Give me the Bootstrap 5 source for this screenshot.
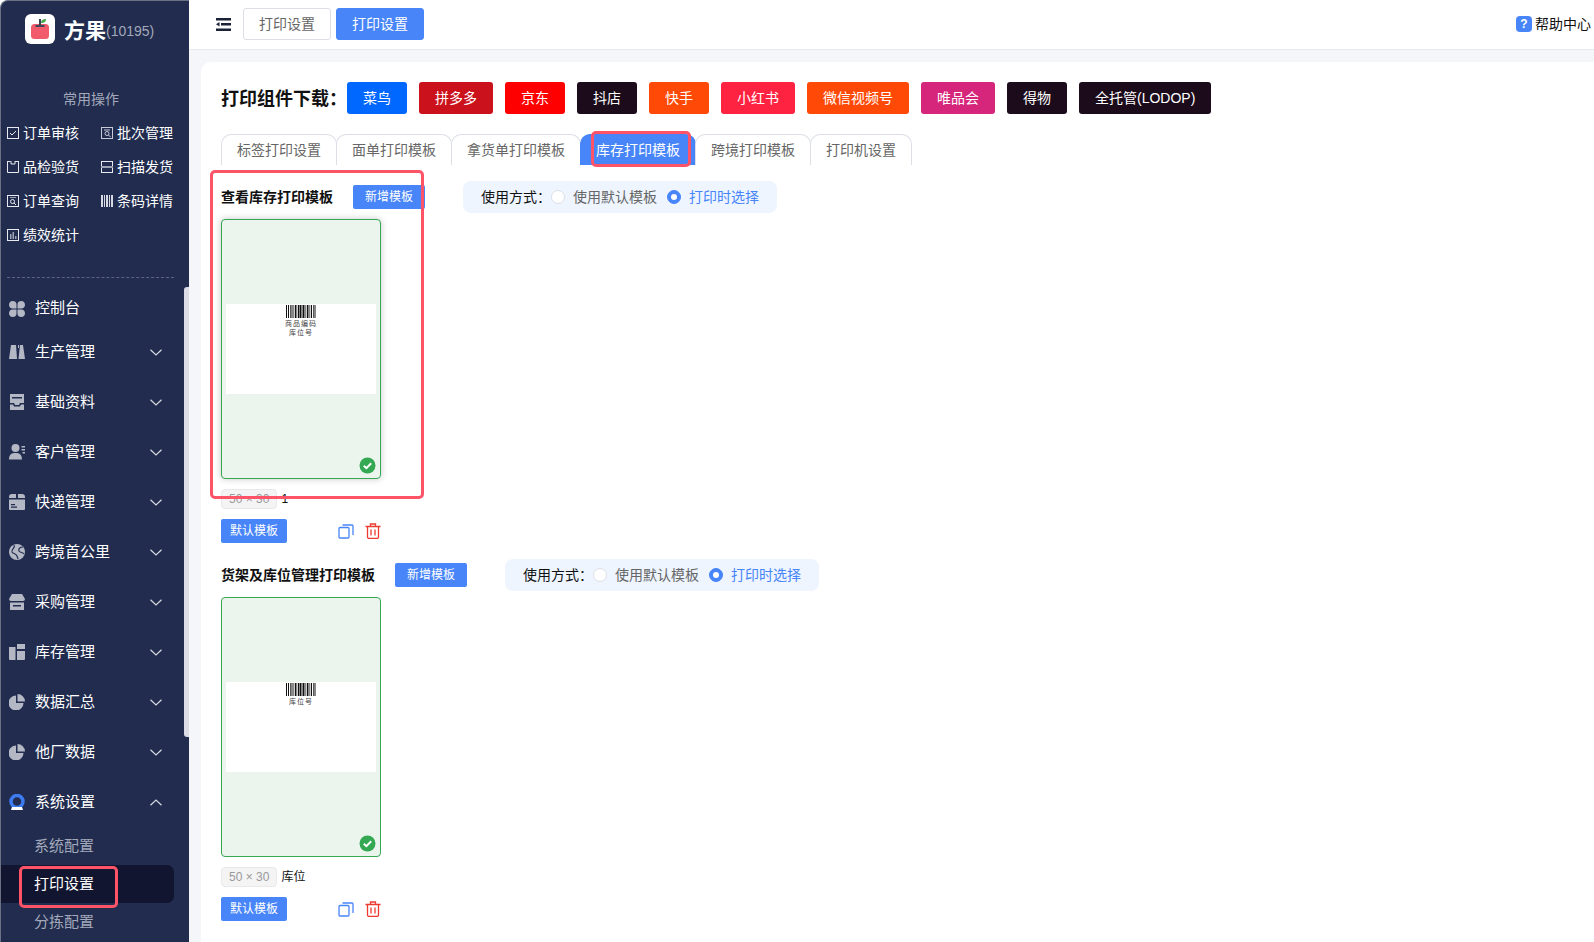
<!DOCTYPE html>
<html lang="zh-CN">
<head>
<meta charset="utf-8">
<title>打印设置</title>
<link href="https://cdn.jsdelivr.net/npm/bootstrap@5.3.0/dist/css/bootstrap.min.css" rel="stylesheet">
<style>
html,body{height:100%;overflow:hidden}
body{font-family:"Liberation Sans","Noto Sans CJK SC",sans-serif;font-size:14px;color:#111;background:#fff}
.app-shell{height:942px;position:relative}
.side{width:189px;background:#212c4f;color:#fff;border-top-left-radius:8px;border-left:1px solid #6b7185;border-top:1px solid #6b7185;position:relative;overflow:hidden}
.brand{height:84px;padding:13px 0 0 24px}
.brand-box{width:30px;height:30px;background:#fff;border-radius:6px}
.brand-name{font-size:21px;font-weight:700;line-height:34px;margin-left:9px}
.brand-id{font-size:14px;color:#a3a9ba;line-height:34px}
.quick-title{height:28px;line-height:28px;text-align:center;font-size:14px;color:#a3a9ba;padding-right:8px;margin-bottom:3px}
.quick-grid{display:grid;grid-template-columns:94px 80px;grid-auto-rows:34px;padding-left:6px}
.quick-item{gap:4px;font-size:14px;line-height:34px;white-space:nowrap}
.quick-item svg{width:12px;height:12px;flex:none}
.side-rule{border-top:1px dashed #5c6480;margin:25px 15px 10px 6px}
.menu-row{height:50px;font-size:15px;padding-left:8px;padding-right:27px;white-space:nowrap}
.menu-row.first-row{height:39px;padding-top:2px}
.menu-row>svg:first-child{width:16px;height:16px;margin-right:10px;flex:none}
.menu-row .chev{width:12px;height:7px;margin-left:auto}
.sub-row{height:38px;line-height:38px;font-size:15px;padding-left:33px;color:#a3a9ba;width:173px}
.sub-row.on{background:#11152f;color:#fff;border-radius:0 7px 7px 0}
.side-scroll{position:absolute;right:0;top:286px;width:5px;height:450px;background:#dcdce6;border-radius:3px 0 0 3px}
.topbar{height:50px;border-bottom:1px solid #e8e9ef;padding:0 3px 1px 27px;background:#fff;flex:none}
.burger{width:15px;height:13px;margin-right:12px}
.top-btn{width:88px;height:32px;padding:0;font-size:14px;line-height:30px;border-radius:3px;margin-right:5px}
.top-btn.plain{background:#fff;border:1px solid #dcdfe6;color:#666}
.top-btn.blue{background:#4785f8;border:1px solid #4785f8;color:#fff}
.help-link{gap:3px;line-height:20px}
.help-mark{width:16px;height:16px;border-radius:4px;background:#4785f8;color:#fff;font-size:12px;font-weight:700;line-height:16px;text-align:center}
.stage{background:#f5f6fa;padding:12px 0 0 12px;min-height:0}
.sheet{background:#fff;border-radius:10px 0 0 0;padding:20px;height:100%;overflow:hidden}
.dl-title{font-size:18px;font-weight:700;width:126px;height:32px;line-height:34px;white-space:nowrap;margin-right:-12px}
.dl-row{gap:12px}
.dl-btn{height:32px;padding:0 16px;font-size:14px;line-height:32px;border:0;border-radius:3px;color:#fff;white-space:nowrap}
.dl-btn:hover{color:#fff}
.c-cn{background:#0068ff}.c-pd{background:#cb111b}.c-jd{background:#f00}.c-dk{background:#1c0b1b}.c-ks{background:#ff4906}.c-xh{background:#ff2342}.c-vp{background:#d6267b}
.tabs-line{border-bottom:0;margin-top:20px;flex-wrap:nowrap}
.tabs-line .nav-link{height:31px;line-height:30px;padding:0 15px;font-size:14px;color:#666;border:1px solid #dcdfe6;border-bottom:0;border-radius:10px 10px 0 0;margin:0 0 0 -1px;background:#fff}
.tabs-line .nav-item:first-child .nav-link{margin-left:0}
.tabs-line .nav-link.active{background:#4785f8;border-color:#4785f8;color:#fff}
.tpl-block{margin-top:16px}
.tpl-head{height:32px}
.tpl-name{font-size:14px;font-weight:700;line-height:32px;margin-right:20px;white-space:nowrap}
.mini-btn{height:24px;padding:0 12px;font-size:12px;line-height:24px;background:#4785f8;border:0;border-radius:2px;color:#fff;white-space:nowrap}
.mini-btn:hover{background:#4785f8;color:#fff}
.mini-btn.tight{padding:0 9px}
.use-box{height:32px;margin-left:38px;padding:0 18px 0 18px;background:#eef5ff;border-radius:8px;white-space:nowrap}
.use-label{width:70px}
.use-box .form-check-input{width:14px;height:14px;margin:0;border-color:#dcdfe6;flex:none}
.use-box .form-check-input:checked{background-color:#4785f8;border-color:#4785f8}
.use-opt{color:#666;margin:0 10px 0 8px}
.use-opt.sel{color:#4785f8;margin-right:0}
.tpl-card{width:160px;height:260px;margin-top:6px;background:#ebf5ee;border:1px solid #34a853;border-radius:4px;position:relative}
.tpl-card.hov{box-shadow:0 0 7px rgba(0,0,0,.22)}
.label-sheet{width:150px;height:90px;background:#fff;text-align:center;padding-top:1px}
.label-sheet svg{display:block;width:30px;height:13px;margin:0 auto 1px}
.label-txt{font-size:7px;line-height:9px;color:#444;letter-spacing:1px;white-space:nowrap}
.ok-badge{position:absolute;right:4px;bottom:4px;width:17px;height:17px}
.size-line{margin-top:10px;height:20px;gap:4px;font-size:12px;line-height:18px}
.size-tag{height:20px;padding:0 7px;background:#f4f4f5;border:1px solid #e9e9eb;border-radius:4px;color:#999;font-size:12px;line-height:18px;white-space:nowrap}
.act-line{margin-top:10px;width:160px}
.act-line svg{width:16px;height:16px}
.act-gap{gap:11px;margin-left:auto}
.anno{position:absolute;border:3px solid #ff5468;border-radius:5px;pointer-events:none}
.anno-a{left:210px;top:170px;width:214px;height:329px}
.anno-b{left:591px;top:131px;width:100px;height:36px}
.anno-c{left:19px;top:866px;width:99px;height:42px}
</style>
</head>
<body>
<div class="app-shell d-flex">
  <aside class="side flex-shrink-0">
    <div class="brand d-flex align-items-start">
      <div class="brand-box d-flex align-items-center justify-content-center">
        <svg width="22" height="22" viewBox="0 0 22 22"><rect x="2" y="6" width="18" height="15" rx="3.5" fill="#f15b6c"/><rect x="10" y="1" width="2" height="8" fill="#3d4656"/><rect x="6.5" y="7" width="9" height="2" fill="#3d4656"/><path d="M12 5c0-3 2-4 5-4 0 3-2 4-5 4z" fill="#4aa84f"/></svg>
      </div>
      <span class="brand-name">方果</span><span class="brand-id">(10195)</span>
    </div>
    <div class="quick-title">常用操作</div>
    <div class="quick-grid">
      <div class="quick-item d-flex align-items-center"><svg viewBox="0 0 12 12" fill="none" stroke="#e8e9ee"><rect x=".5" y=".5" width="11" height="11"/><path d="M3 6l2 2 4-4"/></svg>订单审核</div>
      <div class="quick-item d-flex align-items-center"><svg viewBox="0 0 12 12" fill="none" stroke="#c8cbd6"><rect x=".5" y=".5" width="11" height="11"/><path d="M3 3h6"/><circle cx="6" cy="6.5" r="2"/><path d="M7.5 8L9.5 10"/></svg>批次管理</div>
      <div class="quick-item d-flex align-items-center"><svg viewBox="0 0 12 12" fill="none" stroke="#e8e9ee"><path d="M.5 0v11.500h11V0"/><path d="M.5.500h3M8 .500h3.500"/><path d="M4 0v3h4V0" /></svg>品检验货</div>
      <div class="quick-item d-flex align-items-center"><svg viewBox="0 0 12 12" fill="none" stroke="#e8e9ee"><rect x=".5" y=".5" width="11" height="11"/><path d="M0 6h12" stroke="#9ea3b5" stroke-width="2"/></svg>扫描发货</div>
      <div class="quick-item d-flex align-items-center"><svg viewBox="0 0 12 12" fill="none" stroke="#e8e9ee"><rect x=".5" y=".5" width="11" height="11"/><path d="M3 2.500h6" stroke="#9ea3b5"/><circle cx="5.500" cy="6.500" r="2"/><path d="M7 8l2 2"/></svg>订单查询</div>
      <div class="quick-item d-flex align-items-center"><svg viewBox="0 0 12 12" fill="#d7d9e2"><rect x="0" y="0" width="2" height="12"/><rect x="3" y="0" width="1" height="12"/><rect x="5" y="0" width="2" height="12"/><rect x="8" y="0" width="1" height="12"/><rect x="10" y="0" width="2" height="12"/></svg>条码详情</div>
      <div class="quick-item d-flex align-items-center"><svg viewBox="0 0 12 12"><rect x=".5" y=".5" width="11" height="11" fill="none" stroke="#e8e9ee"/><path d="M3 5h1.500v5H3zM5.500 3H7v7H5.500zM8 7h1.500v3H8z" fill="#9ea3b5"/></svg>绩效统计</div>
    </div>
    <div class="side-rule"></div>
    <div class="menu-row first-row d-flex align-items-center"><svg viewBox="0 0 16 16" fill="#b4b7c4"><path d="M3.700 0c2.500 0 3.800 1.500 3.800 3.500v4H3.500C1.500 7.500 0 6 0 3.700 0 1.500 1.500 0 3.700 0zM12.300 0C14.500 0 16 1.500 16 3.700c0 2.300-1.500 3.800-3.500 3.800h-4v-4C8.500 1.500 9.800 0 12.300 0zM3.500 8.500h4v4c0 2-1.300 3.500-3.800 3.500C1.500 16 0 14.500 0 12.300 0 10 1.500 8.500 3.500 8.500zM8.500 8.500h4c2 0 3.500 1.500 3.500 3.800 0 2.200-1.500 3.700-3.700 3.700-2.500 0-3.800-1.500-3.800-3.500z"/></svg>控制台</div>
    <div class="menu-row d-flex align-items-center"><svg viewBox="0 0 16 16" fill="#b4b7c4"><path d="M2 1h5l1 14H0zM11 1h3l2 14H9.500zM9 1h1v3H9z"/></svg>生产管理<svg class="chev" viewBox="0 0 12 7" fill="none" stroke="#d8dae3" stroke-width="1.200"><path d="M.5.800L6 6l5.500-5.200"/></svg></div>
    <div class="menu-row d-flex align-items-center"><svg viewBox="0 0 16 16" fill="#b4b7c4"><path d="M1 0h14v9h-4l-1 2H6L5 9H1zM3 3v1.500h10V3zM1 10.500h3l1 2h6l1-2h3V16H1z"/></svg>基础资料<svg class="chev" viewBox="0 0 12 7" fill="none" stroke="#d8dae3" stroke-width="1.200"><path d="M.5.800L6 6l5.500-5.200"/></svg></div>
    <div class="menu-row d-flex align-items-center"><svg viewBox="0 0 16 16" fill="#b4b7c4"><circle cx="6.500" cy="4" r="4"/><path d="M0 15.500c0-5.500 3-6.500 6.500-6.500s6.500 1 6.500 6.500zM12.500 2h3.500v1.500h-3.500zM12.500 5h3.500v1.500h-3.500zM13.500 8h2.500v1.500h-2.500z"/></svg>客户管理<svg class="chev" viewBox="0 0 12 7" fill="none" stroke="#d8dae3" stroke-width="1.200"><path d="M.5.800L6 6l5.500-5.200"/></svg></div>
    <div class="menu-row d-flex align-items-center"><svg viewBox="0 0 16 16" fill="#b4b7c4"><path d="M3 0h4v4H0V3a3 3 0 0 1 3-3zM9 0h4a3 3 0 0 1 3 3v1H9zM0 5.500h16V15a1 1 0 0 1-1 1H1a1 1 0 0 1-1-1zM2 10v1.300h4V10zM2 12.500v1.200h6v-1.200z"/></svg>快递管理<svg class="chev" viewBox="0 0 12 7" fill="none" stroke="#d8dae3" stroke-width="1.200"><path d="M.5.800L6 6l5.500-5.200"/></svg></div>
    <div class="menu-row d-flex align-items-center"><svg viewBox="0 0 16 16"><circle cx="8" cy="8" r="8" fill="#b4b7c4"/><path d="M5 1c2 3-3 4-2 7 1 2 4 1 5 4l1 3M14 3c-3 0-5 2-4 4s4 1 5 3" fill="none" stroke="#212c4f" stroke-width="1.200"/></svg>跨境首公里<svg class="chev" viewBox="0 0 12 7" fill="none" stroke="#d8dae3" stroke-width="1.200"><path d="M.5.800L6 6l5.500-5.200"/></svg></div>
    <div class="menu-row d-flex align-items-center"><svg viewBox="0 0 16 16" fill="#b4b7c4"><path d="M3 0h10l3 5a2 2 0 0 1-2 2H2a2 2 0 0 1-2-2zM1 8.500h14V16H1zM4 11v1.500h8V11z"/></svg>采购管理<svg class="chev" viewBox="0 0 12 7" fill="none" stroke="#d8dae3" stroke-width="1.200"><path d="M.5.800L6 6l5.500-5.200"/></svg></div>
    <div class="menu-row d-flex align-items-center"><svg viewBox="0 0 16 16" fill="#b4b7c4"><path d="M0 3h6.500v13H1a1 1 0 0 1-1-1zM8 0h8v5H8zM8 7h8v8a1 1 0 0 1-1 1H8z"/></svg>库存管理<svg class="chev" viewBox="0 0 12 7" fill="none" stroke="#d8dae3" stroke-width="1.200"><path d="M.5.800L6 6l5.500-5.200"/></svg></div>
    <div class="menu-row d-flex align-items-center"><svg viewBox="0 0 16 16" fill="#b4b7c4"><path d="M7 1.500v7.500h7.500A7.500 7.500 0 1 1 7 1.500zM8.500 0A7.500 7.500 0 0 1 16 7.500H8.500z"/></svg>数据汇总<svg class="chev" viewBox="0 0 12 7" fill="none" stroke="#d8dae3" stroke-width="1.200"><path d="M.5.800L6 6l5.500-5.200"/></svg></div>
    <div class="menu-row d-flex align-items-center"><svg viewBox="0 0 16 16" fill="#b4b7c4"><path d="M7 1.500v7.500h7.500A7.500 7.500 0 1 1 7 1.500zM8.500 0A7.500 7.500 0 0 1 16 7.500H8.500z"/></svg>他厂数据<svg class="chev" viewBox="0 0 12 7" fill="none" stroke="#d8dae3" stroke-width="1.200"><path d="M.5.800L6 6l5.500-5.200"/></svg></div>
    <div class="menu-row d-flex align-items-center"><svg viewBox="0 0 16 16"><circle cx="8" cy="7.500" r="6" fill="none" stroke="#3d7bf0" stroke-width="3.500"/><path d="M3 13h10l1 3H2z" fill="#fff"/></svg>系统设置<svg class="chev" viewBox="0 0 12 7" fill="none" stroke="#d8dae3" stroke-width="1.200"><path d="M.5 6.200L6 1l5.500 5.200"/></svg></div>
    <div class="sub-row">系统配置</div>
    <div class="sub-row on">打印设置</div>
    <div class="sub-row">分拣配置</div>
    <div class="side-scroll"></div>
  </aside>

  <main class="flex-grow-1 d-flex flex-column" style="min-width:0">
    <header class="topbar d-flex align-items-center">
      <svg class="burger" viewBox="0 0 15 13" fill="#1b2136"><rect width="15" height="2.500"/><rect x="5" y="5" width="10" height="2.500"/><rect y="10.500" width="15" height="2.500"/><path d="M0 6.300L3.500 4v4.500z"/></svg>
      <button type="button" class="btn top-btn plain">打印设置</button>
      <button type="button" class="btn top-btn blue">打印设置</button>
      <div class="help-link d-flex align-items-center ms-auto"><span class="help-mark">?</span><span>帮助中心</span></div>
    </header>
    <div class="stage flex-grow-1">
      <div class="sheet">
        <div class="dl-row d-flex align-items-center">
          <div class="dl-title">打印组件下载：</div>
          <a class="btn dl-btn c-cn">菜鸟</a>
          <a class="btn dl-btn c-pd">拼多多</a>
          <a class="btn dl-btn c-jd">京东</a>
          <a class="btn dl-btn c-dk">抖店</a>
          <a class="btn dl-btn c-ks">快手</a>
          <a class="btn dl-btn c-xh">小红书</a>
          <a class="btn dl-btn c-ks">微信视频号</a>
          <a class="btn dl-btn c-vp">唯品会</a>
          <a class="btn dl-btn c-dk">得物</a>
          <a class="btn dl-btn c-dk">全托管(LODOP)</a>
        </div>
        <ul class="nav nav-tabs tabs-line">
          <li class="nav-item"><a class="nav-link">标签打印设置</a></li>
          <li class="nav-item"><a class="nav-link">面单打印模板</a></li>
          <li class="nav-item"><a class="nav-link">拿货单打印模板</a></li>
          <li class="nav-item"><a class="nav-link active">库存打印模板</a></li>
          <li class="nav-item"><a class="nav-link">跨境打印模板</a></li>
          <li class="nav-item"><a class="nav-link">打印机设置</a></li>
        </ul>

        <section class="tpl-block">
          <div class="tpl-head d-flex align-items-center">
            <span class="tpl-name">查看库存打印模板</span>
            <button type="button" class="btn mini-btn">新增模板</button>
            <div class="use-box d-flex align-items-center">
              <span class="use-label">使用方式：</span>
              <input class="form-check-input" type="radio" name="use1" aria-label="使用默认模板"><span class="use-opt">使用默认模板</span>
              <input class="form-check-input" type="radio" name="use1" checked aria-label="打印时选择"><span class="use-opt sel">打印时选择</span>
            </div>
          </div>
          <div class="tpl-card hov d-flex align-items-center justify-content-center">
            <div class="label-sheet">
              <svg viewBox="0 0 30 13" fill="#111"><path d="M0 0h1v13H0zM2 0h1v13H2zM4 0h.7v13H4zM5.500 0h1v13h-1zM7.500 0h.7v13h-.7zM9 0h1v13H9zM10.500 0h.7v13h-.7zM12 0h1.500v13H12zM14 0h1v13h-1zM15.500 0h1v13h-1zM17 0h1.500v13H17zM19.500 0h.7v13h-.7zM21 0h1.500v13H21zM23.500 0h.7v13h-.7zM25 0h1v13h-1zM27 0h.7v13H27zM28.500 0h1v13h-1z"/></svg>
              <div class="label-txt">商品编码</div>
              <div class="label-txt">库位号</div>
            </div>
            <svg class="ok-badge" viewBox="0 0 17 17"><circle cx="8.500" cy="8.500" r="8" fill="#34a853"/><path d="M4.800 8.700l2.600 2.500 4.800-4.900" fill="none" stroke="#fff" stroke-width="2"/></svg>
          </div>
          <div class="size-line d-flex align-items-center"><span class="size-tag">50 × 30</span><span>1</span></div>
          <div class="act-line d-flex align-items-center">
            <button type="button" class="btn mini-btn tight">默认模板</button>
            <div class="act-gap d-flex align-items-center">
              <svg viewBox="0 0 16 16" fill="none" stroke="#4785f8" stroke-width="1.300"><rect x="1" y="4.500" width="10" height="10.500" rx="1"/><path d="M4.500 2h9.500a1 1 0 0 1 1 1v9"/></svg>
              <svg viewBox="0 0 16 16" fill="none" stroke="#ee3b30" stroke-width="1.300"><path d="M.5 3.500h15M5.500 3.500V1h5v2.500M2.500 3.500V14a1.500 1.500 0 0 0 1.500 1.500h8a1.500 1.500 0 0 0 1.500-1.500V3.500M6 6.500v6M10 6.500v6"/></svg>
            </div>
          </div>
        </section>

        <section class="tpl-block">
          <div class="tpl-head d-flex align-items-center">
            <span class="tpl-name">货架及库位管理打印模板</span>
            <button type="button" class="btn mini-btn">新增模板</button>
            <div class="use-box d-flex align-items-center">
              <span class="use-label">使用方式：</span>
              <input class="form-check-input" type="radio" name="use2" aria-label="使用默认模板"><span class="use-opt">使用默认模板</span>
              <input class="form-check-input" type="radio" name="use2" checked aria-label="打印时选择"><span class="use-opt sel">打印时选择</span>
            </div>
          </div>
          <div class="tpl-card d-flex align-items-center justify-content-center">
            <div class="label-sheet">
              <svg viewBox="0 0 30 13" fill="#111"><path d="M0 0h1v13H0zM2 0h1v13H2zM4 0h.7v13H4zM5.500 0h1v13h-1zM7.500 0h.7v13h-.7zM9 0h1v13H9zM10.500 0h.7v13h-.7zM12 0h1.500v13H12zM14 0h1v13h-1zM15.500 0h1v13h-1zM17 0h1.500v13H17zM19.500 0h.7v13h-.7zM21 0h1.500v13H21zM23.500 0h.7v13h-.7zM25 0h1v13h-1zM27 0h.7v13H27zM28.500 0h1v13h-1z"/></svg>
              <div class="label-txt">库位号</div>
            </div>
            <svg class="ok-badge" viewBox="0 0 17 17"><circle cx="8.500" cy="8.500" r="8" fill="#34a853"/><path d="M4.800 8.700l2.600 2.500 4.800-4.900" fill="none" stroke="#fff" stroke-width="2"/></svg>
          </div>
          <div class="size-line d-flex align-items-center"><span class="size-tag">50 × 30</span><span>库位</span></div>
          <div class="act-line d-flex align-items-center">
            <button type="button" class="btn mini-btn tight">默认模板</button>
            <div class="act-gap d-flex align-items-center">
              <svg viewBox="0 0 16 16" fill="none" stroke="#4785f8" stroke-width="1.300"><rect x="1" y="4.500" width="10" height="10.500" rx="1"/><path d="M4.500 2h9.500a1 1 0 0 1 1 1v9"/></svg>
              <svg viewBox="0 0 16 16" fill="none" stroke="#ee3b30" stroke-width="1.300"><path d="M.5 3.500h15M5.500 3.500V1h5v2.500M2.500 3.500V14a1.500 1.500 0 0 0 1.500 1.500h8a1.500 1.500 0 0 0 1.500-1.500V3.500M6 6.500v6M10 6.500v6"/></svg>
            </div>
          </div>
        </section>
      </div>
    </div>
  </main>
  <div class="anno anno-a"></div>
  <div class="anno anno-b"></div>
  <div class="anno anno-c"></div>
</div>
<script src="https://cdn.jsdelivr.net/npm/bootstrap@5.3.0/dist/js/bootstrap.bundle.min.js"></script>
</body>
</html>
